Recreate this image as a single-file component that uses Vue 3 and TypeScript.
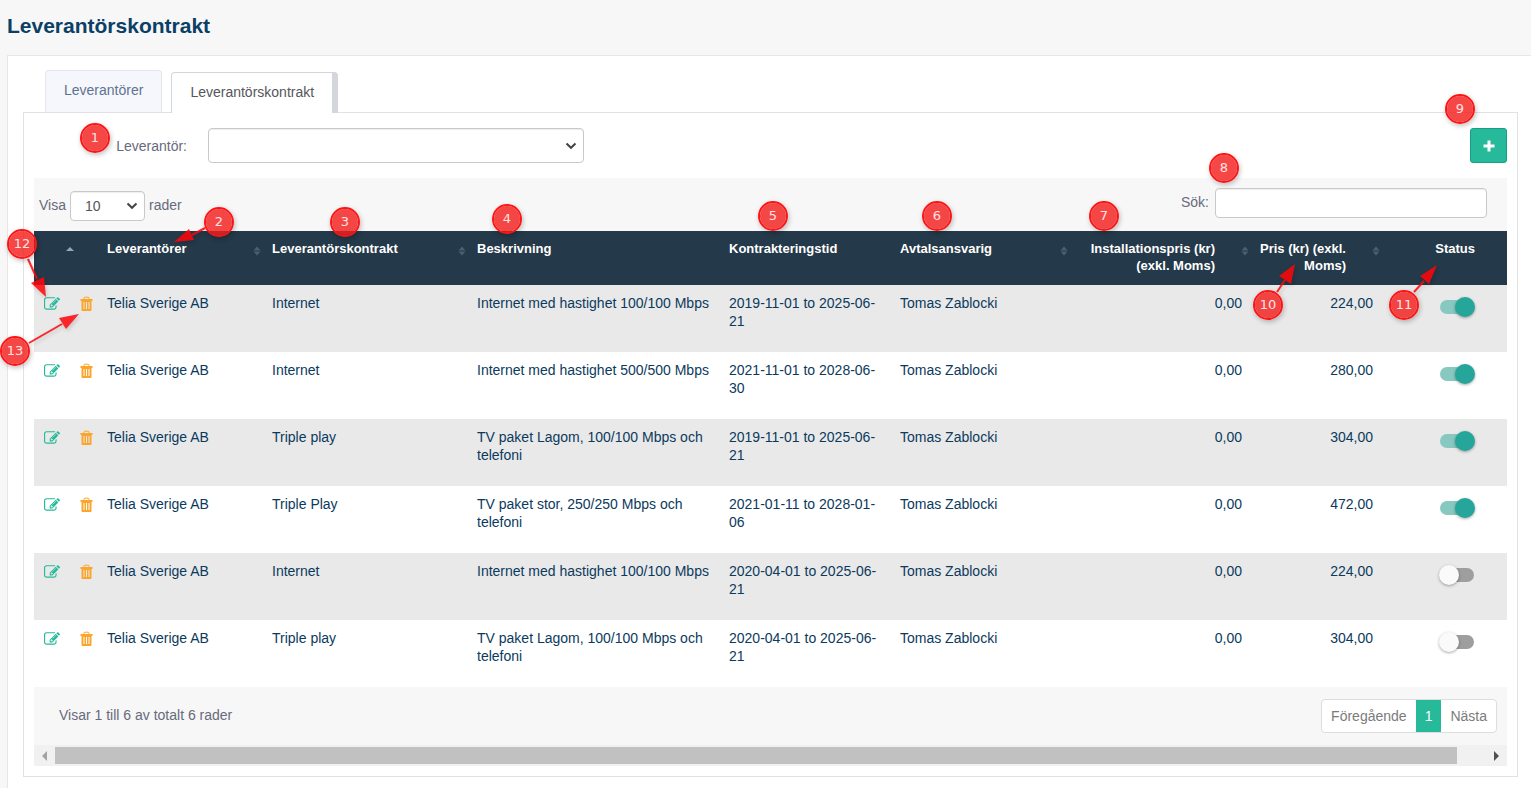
<script setup lang="ts">
import { ref } from 'vue'

interface Contract {
  supplier: string
  contract: string
  description: string
  period: string
  owner: string
  install: string
  price: string
  active: boolean
}

const supplier = ref('')
const pageSize = ref('10')
const search = ref('')

const columns = [
  { label: 'Leverantörer', sortable: true, kind: 'text' },
  { label: 'Leverantörskontrakt', sortable: true, kind: 'text' },
  { label: 'Beskrivning', sortable: false, kind: 'text' },
  { label: 'Kontrakteringstid', sortable: false, kind: 'text' },
  { label: 'Avtalsansvarig', sortable: true, kind: 'text' },
  { label: 'Installationspris (kr) (exkl. Moms)', sortable: true, kind: 'num' },
  { label: 'Pris (kr) (exkl. Moms)', sortable: true, kind: 'num' },
]

const who = { supplier: 'Telia Sverige AB', owner: 'Tomas Zablocki', install: '0,00' }

const rows = ref<Contract[]>([
  { ...who, contract: 'Internet', description: 'Internet med hastighet 100/100 Mbps', period: '2019-11-01 to 2025-06-21', price: '224,00', active: true },
  { ...who, contract: 'Internet', description: 'Internet med hastighet 500/500 Mbps', period: '2021-11-01 to 2028-06-30', price: '280,00', active: true },
  { ...who, contract: 'Triple play', description: 'TV paket Lagom, 100/100 Mbps och telefoni', period: '2019-11-01 to 2025-06-21', price: '304,00', active: true },
  { ...who, contract: 'Triple Play', description: 'TV paket stor, 250/250 Mbps och telefoni', period: '2021-01-11 to 2028-01-06', price: '472,00', active: true },
  { ...who, contract: 'Internet', description: 'Internet med hastighet 100/100 Mbps', period: '2020-04-01 to 2025-06-21', price: '224,00', active: false },
  { ...who, contract: 'Triple play', description: 'TV paket Lagom, 100/100 Mbps och telefoni', period: '2020-04-01 to 2025-06-21', price: '304,00', active: false },
])

// Annotation pins laid over the page: centre of each pin.
const pins = [
  { n: 1, x: 95, y: 138 },
  { n: 2, x: 219, y: 222 },
  { n: 3, x: 345, y: 222 },
  { n: 4, x: 507, y: 219 },
  { n: 5, x: 773, y: 216 },
  { n: 6, x: 937, y: 216 },
  { n: 7, x: 1104, y: 216 },
  { n: 8, x: 1224, y: 168 },
  { n: 9, x: 1460, y: 109 },
  { n: 10, x: 1268, y: 305 },
  { n: 11, x: 1404, y: 305 },
  { n: 12, x: 22, y: 244 },
  { n: 13, x: 15, y: 351 },
]

const arrows = [
  { line: 'M205 228L192 235', head: '174,242 189,229 194,240' },
  { line: 'M28 259L37 279', head: '46,297 31,283 44,277' },
  { line: 'M29 343L62 324', head: '79,314 59,318 66,329' },
  { line: 'M1277 292L1285 280', head: '1295,264 1279,276 1291,284' },
  { line: 'M1414 292L1424 281', head: '1437,265 1420,276 1429,284' },
]
</script>

<template>
  <main class="page">
    <h1 class="title">Leverantörskontrakt</h1>

    <section class="card">
      <nav class="tabs">
        <a class="tab" href="#leverantorer">Leverantörer</a>
        <a class="tab tab-active" href="#kontrakt" aria-current="page">Leverantörskontrakt</a>
      </nav>

      <div class="panel">
        <div class="filter">
          <label class="filter-label" for="supplier">Leverantör:</label>
          <div class="select-wrap">
            <select id="supplier" v-model="supplier" class="field select select-supplier">
              <option value=""></option>
              <option>Telia Sverige AB</option>
            </select>
            <svg class="chevron" viewBox="0 0 12 8" aria-hidden="true"><path d="M1.5 1.5L6 5.8L10.500 1.500" /></svg>
          </div>
          <button class="add" type="button" aria-label="Lägg till">
            <svg viewBox="0 0 12 12" aria-hidden="true"><path d="M4.500 0.500h3v4h4v3h-4v4h-3v-4h-4v-3h4z" /></svg>
          </button>
        </div>

        <div class="toolbar">
          <div class="length">
            <label for="length">Visa</label>
            <div class="select-wrap">
              <select id="length" v-model="pageSize" class="field select select-length">
                <option>10</option>
                <option>25</option>
                <option>50</option>
              </select>
              <svg class="chevron" viewBox="0 0 12 8" aria-hidden="true"><path d="M1.5 1.5L6 5.8L10.500 1.500" /></svg>
            </div>
            <span>rader</span>
          </div>
          <div class="search">
            <label for="search">Sök:</label>
            <input id="search" v-model="search" class="field search-input" type="search" />
          </div>
        </div>

        <table class="grid">
          <colgroup>
            <col class="c-edit" /><col class="c-del" /><col class="c-sup" /><col class="c-con" /><col class="c-desc" />
            <col class="c-time" /><col class="c-own" /><col class="c-inst" /><col class="c-price" /><col class="c-stat" />
          </colgroup>
          <thead>
            <tr>
              <th class="sort-cell">
                <button class="head" type="button" aria-label="Sortera">
                  <svg class="sort sort-asc" viewBox="0 0 8 10" aria-hidden="true"><path d="M0 5L4 1L8 5z" /></svg>
                </button>
              </th>
              <th></th>
              <th v-for="c in columns" :key="c.label" :class="c.kind" scope="col">
                <button v-if="c.sortable" class="head" type="button">
                  <span>{{ c.label }}</span>
                  <svg class="sort" viewBox="0 0 8 10" aria-hidden="true"><path d="M0.500 4.500L4 0.500L7.500 4.500zM0.500 5.500h7L4 9.500z" /></svg>
                </button>
                <template v-else>{{ c.label }}</template>
              </th>
              <th class="status" scope="col">Status</th>
            </tr>
          </thead>
          <tbody>
            <tr v-for="(r, i) in rows" :key="i">
              <td class="edit-cell">
                <button class="icon edit" type="button" aria-label="Redigera">
                  <svg viewBox="0 0 1792 1792" aria-hidden="true"><path d="M888 1184l116-116-152-152-116 116v56h96v96h56zm440-720q-16-16-33 1l-350 350q-17 17-1 33t33-1l350-350q17-17 1-33zm80 594v190q0 119-84.500 203.500t-203.500 84.500h-832q-119 0-203.500-84.500t-84.500-203.500v-832q0-119 84.500-203.500t203.500-84.500h832q63 0 117 25 15 7 18 23 3 17-9 29l-49 49q-14 14-32 8-23-6-45-6h-832q-66 0-113 47t-47 113v832q0 66 47 113t113 47h832q66 0 113-47t47-113v-126q0-13 9-22l64-64q15-15 35-7t20 29zm-96-738l288 288-672 672h-288v-288zm444 132l-92 92-288-288 92-92q28-28 68-28t68 28l152 152q28 28 28 68t-28 68z" /></svg>
                </button>
              </td>
              <td class="del-cell">
                <button class="icon del" type="button" aria-label="Ta bort">
                  <svg viewBox="0 0 13 16" aria-hidden="true">
                    <path class="lid" d="M4 3V2.200Q4 1.200 5 1.200H8Q9 1.200 9 2.200V3" />
                    <path fill-rule="evenodd" d="M0.500 3H12.500V5H11.500V14Q11.500 15 10.500 15H2.500Q1.500 15 1.500 14V5H0.500zM3.500 6V13H4.500V6zM6 6V13H7V6zM8.500 6V13H9.500V6z" />
                  </svg>
                </button>
              </td>
              <td>{{ r.supplier }}</td>
              <td>{{ r.contract }}</td>
              <td>{{ r.description }}</td>
              <td>{{ r.period }}</td>
              <td>{{ r.owner }}</td>
              <td class="num">{{ r.install }}</td>
              <td class="num">{{ r.price }}</td>
              <td class="status">
                <input v-model="r.active" class="toggle" type="checkbox" role="switch" aria-label="Status" />
              </td>
            </tr>
          </tbody>
        </table>

        <div class="footer">
          <span class="info">Visar 1 till 6 av totalt 6 rader</span>
          <nav class="pager">
            <a href="#prev">Föregående</a>
            <a class="current" href="#1" aria-current="page">1</a>
            <a href="#next">Nästa</a>
          </nav>
        </div>

        <div class="scrollbar" aria-hidden="true">
          <svg class="arrow arrow-off" viewBox="0 0 21 21"><path d="M13 6v10L8 11z" /></svg>
          <div class="track"><div class="thumb"></div></div>
          <svg class="arrow" viewBox="0 0 21 21"><path d="M8 6v10L13 11z" /></svg>
        </div>
      </div>
    </section>

    <div class="notes">
      <svg class="note-arrows" width="1531" height="788" aria-hidden="true">
        <g v-for="a in arrows" :key="a.line">
          <path :d="a.line" />
          <polygon :points="a.head" />
        </g>
      </svg>
      <span v-for="p in pins" :key="p.n" class="pin" :style="{ left: p.x + 'px', top: p.y + 'px' }">{{ p.n }}</span>
    </div>
  </main>
</template>

<style>
body {
  background: #f7f7f7;
}
</style>

<style scoped>
* {
  box-sizing: border-box;
}
.page {
  position: relative;
  display: flex;
  flex-direction: column;
  min-height: 100vh;
  overflow: hidden;
  padding-left: 7px;
  font-family: "Liberation Sans", Arial, sans-serif;
  font-size: 14px;
  line-height: 18px;
  color: #676a7c;
}
button,
input,
select {
  font: inherit;
  color: inherit;
}
a {
  color: inherit;
  text-decoration: none;
}
.title {
  margin: 0;
  padding: 14px 0 17px;
  font-size: 21px;
  line-height: 24px;
  color: #0b3f66;
}
.card {
  flex: 1;
  padding: 14px 13px 11px 15px;
  background: #fff;
  border: solid #e7e7e7;
  border-width: 1px 0 0 1px;
}
.tabs {
  display: flex;
  align-items: flex-end;
  gap: 9px;
  padding-left: 22px;
}
.tab {
  height: 42px;
  padding: 10px 18px;
  color: #5f7390;
  background: #f5f7fc;
  border: 1px solid #e4e7ee;
  border-bottom: 0;
  border-radius: 4px 4px 0 0;
}
.tab-active {
  position: relative;
  height: 41px;
  margin-bottom: -1px;
  color: #55565c;
  background: #fff;
  border-color: #d3d7db;
  border-right: 6px solid #d3d7db;
}
.panel {
  padding: 15px 10px 10px;
  border: 1px solid #e1e2e3;
}
.filter {
  display: flex;
  align-items: center;
  margin-bottom: 15px;
}
.filter-label {
  width: 153px;
  margin-right: 21px;
  text-align: right;
}
.select-wrap {
  display: grid;
  align-items: center;
}
.select-wrap > * {
  grid-area: 1 / 1;
}
.filter .select-wrap {
  flex: 0 1 376px;
}
.chevron {
  width: 12px;
  height: 8px;
  margin-right: 7px;
  justify-self: end;
  pointer-events: none;
  fill: none;
  stroke: #444;
  stroke-width: 2;
}
.field {
  background: #fff;
  border: 1px solid #c9c9c9;
  border-radius: 4px;
  outline: 0;
  box-shadow: inset 0 1px 1px rgba(0, 0, 0, 0.07);
}
.select {
  appearance: none;
  width: 100%;
}
.select-supplier {
  height: 35px;
  padding: 0 24px 0 12px;
}
.add {
  display: grid;
  place-items: center;
  width: 37px;
  height: 35px;
  margin-left: auto;
  padding: 0;
  background: #26b99a;
  border: 1px solid #169f85;
  border-radius: 3px;
}
.add svg {
  width: 12px;
  height: 12px;
  fill: #fff;
}
.toolbar {
  display: flex;
  justify-content: space-between;
  height: 53px;
  padding: 10px 20px 0 5px;
  background: #f7f7f7;
}
.length {
  display: flex;
  gap: 4px;
  align-items: flex-start;
  line-height: 34px;
}
.length .select-wrap {
  width: 75px;
  margin-top: 3px;
}
.select-length {
  height: 30px;
  padding: 0 14px;
  line-height: 28px;
  color: #555;
}
.search {
  display: flex;
  gap: 6px;
  align-items: flex-start;
  line-height: 28px;
}
.search-input {
  width: 272px;
  height: 30px;
  padding: 0 8px;
}
.grid {
  width: 100%;
  table-layout: fixed;
  border-collapse: collapse;
  color: #0b3a5d;
}
.c-edit { width: 40px; }
.c-del { width: 23px; }
.c-sup { width: 165px; }
.c-con { width: 205px; }
.c-desc { width: 252px; }
.c-time { width: 171px; }
.c-own { width: 179px; }
.c-inst { width: 181px; }
.c-price { width: 131px; }
.c-stat { width: 126px; }
th {
  height: 54px;
  padding: 9px 1px 0 10px;
  font-size: 13px;
  line-height: 17px;
  text-align: left;
  vertical-align: top;
  color: #fff;
  background: #243949;
}
th.num {
  padding-left: 8px;
}
.head {
  display: flex;
  justify-content: space-between;
  align-items: flex-start;
  width: 100%;
  padding: 0;
  text-align: inherit;
  background: none;
  border: 0;
}
th.num .head {
  justify-content: flex-end;
  gap: 26px;
}
.sort {
  flex: none;
  width: 8px;
  height: 10px;
  margin-top: 6px;
  fill: #4d5f6d;
}
.sort-cell {
  padding-right: 0;
}
.sort-asc {
  margin-left: auto;
  fill: #9aa5ad;
}
td {
  height: 67px;
  padding: 9px 8px 0 10px;
  vertical-align: top;
}
tbody tr:nth-child(odd) {
  background: #e9e9e9;
}
.num {
  text-align: right;
}
.status,
th.status {
  padding-right: 32px;
  text-align: right;
}
td.edit-cell,
td.del-cell {
  padding-right: 0;
}
td.del-cell {
  padding-left: 6px;
}
.icon {
  display: block;
  padding: 2px 0 0;
  background: none;
  border: 0;
}
.icon svg {
  display: block;
  height: 16px;
}
.edit svg {
  width: 16px;
  fill: #26b99a;
}
.del svg {
  width: 13px;
  fill: #fba52c;
}
.del .lid {
  fill: none;
  stroke: #fba52c;
}
.toggle {
  appearance: none;
  display: grid;
  align-items: center;
  width: 36px;
  height: 20px;
  margin: 3px 0 0 auto;
}
.toggle::before,
.toggle::after {
  content: "";
  grid-area: 1 / 1;
}
.toggle::before {
  width: 34px;
  height: 14px;
  margin-left: 1px;
  border-radius: 7px;
  background: #9e9e9e;
}
.toggle::after {
  width: 20px;
  height: 20px;
  border-radius: 50%;
  background: #fafafa;
  box-shadow: 0 1px 3px rgba(0, 0, 0, 0.35);
}
.toggle:checked::before {
  background: #87c8c1;
}
.toggle:checked::after {
  justify-self: end;
  background: #26a69a;
}
.footer {
  display: flex;
  justify-content: space-between;
  align-items: flex-start;
  height: 58px;
  padding: 12px 10px 0 25px;
  background: #f7f7f7;
}
.info {
  padding-top: 7px;
}
.pager {
  display: flex;
  overflow: hidden;
  color: #7b7b7b;
  background: #fff;
  border: 1px solid #ddd;
  border-radius: 4px;
}
.pager a {
  padding: 7px 9px;
}
.pager .current {
  color: #fff;
  background: #26b99a;
}
.scrollbar {
  display: flex;
  align-items: center;
  height: 21px;
  background: #f1f1f1;
}
.arrow {
  width: 21px;
  height: 21px;
  fill: #505050;
}
.arrow-off {
  fill: #a3a3a3;
}
.track {
  flex: 1;
}
.thumb {
  width: 98%;
  height: 17px;
  background: #c1c1c1;
}
.notes {
  position: absolute;
  inset: 0;
  pointer-events: none;
}
.note-arrows {
  position: absolute;
  top: 0;
  left: 0;
  fill: #ff0508;
  stroke: none;
  opacity: 0.86;
  filter: drop-shadow(1px 2px 2px rgba(0, 0, 0, 0.2));
}
.note-arrows path {
  fill: none;
  stroke: #ff0508;
  stroke-width: 2;
}
.pin {
  position: absolute;
  width: 30px;
  height: 30px;
  margin: -15px 0 0 -15px;
  border: 2px solid #fd1414;
  border-radius: 50%;
  background: rgba(244, 30, 30, 0.82);
  background-clip: padding-box;
  box-shadow: 1px 2px 5px rgba(0, 0, 0, 0.25);
  font-family: "DejaVu Sans", Verdana, sans-serif;
  font-size: 13px;
  line-height: 26px;
  text-align: center;
  color: #ffe3e3;
}
</style>
